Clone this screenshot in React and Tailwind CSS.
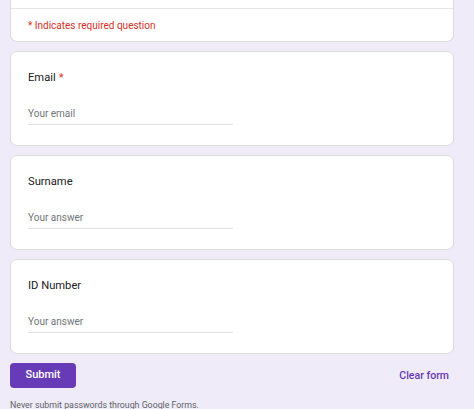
import React from 'react';

function Question({ label, required, placeholder }) {
  return (
    <div className="bg-white border border-[#dadce0] rounded-[7px] px-[17px] pt-[17px] pb-[20px]">
      <div className="h-[17px] leading-[17px] text-[11.2px] text-[#202124]">
        {label}
        {required && <span className="text-[#d93025] ml-[3px]">*</span>}
      </div>
      <div className="mt-[16px] w-[205px] h-[23px] border-b border-[#e3e3e3] flex items-center">
        <input
          type="text"
          placeholder={placeholder}
          className="w-full bg-transparent outline-none text-[10px] text-[#202124] placeholder:text-[#70757a]"
        />
      </div>
    </div>
  );
}

export default function App() {
  return (
    <div
      className="h-[409px] w-[474px] overflow-hidden bg-[#f0ebf8]"
      style={{ fontFamily: 'Roboto, "Liberation Sans", sans-serif' }}
    >
      <div className="w-[444px] ml-[10px] flex flex-col gap-[9px]">
        {/* Header card, cut at the top */}
        <div className="bg-white border-x border-b border-[#dadce0] rounded-b-[7px]">
          <div className="h-[9px] border-b border-[#e6e6e6]" />
          <div className="h-[32px] flex items-center px-[17px] text-[10px] text-[#d93025]">
            * Indicates required question
          </div>
        </div>

        <Question label="Email" required placeholder="Your email" />
        <Question label="Surname" placeholder="Your answer" />
        <Question label="ID Number" placeholder="Your answer" />

        <div className="flex items-center justify-between">
          <button className="h-[25px] w-[66px] rounded-[4px] bg-[#673ab7] text-white text-[11px] font-medium">
            Submit
          </button>
          <button className="mr-[5px] text-[10.5px] font-medium text-[#673ab7]">
            Clear form
          </button>
        </div>

        <div className="mt-[2px] text-[8.8px] leading-[12px] text-[#5f6368]">
          Never submit passwords through Google Forms.
        </div>
      </div>
    </div>
  );
}
